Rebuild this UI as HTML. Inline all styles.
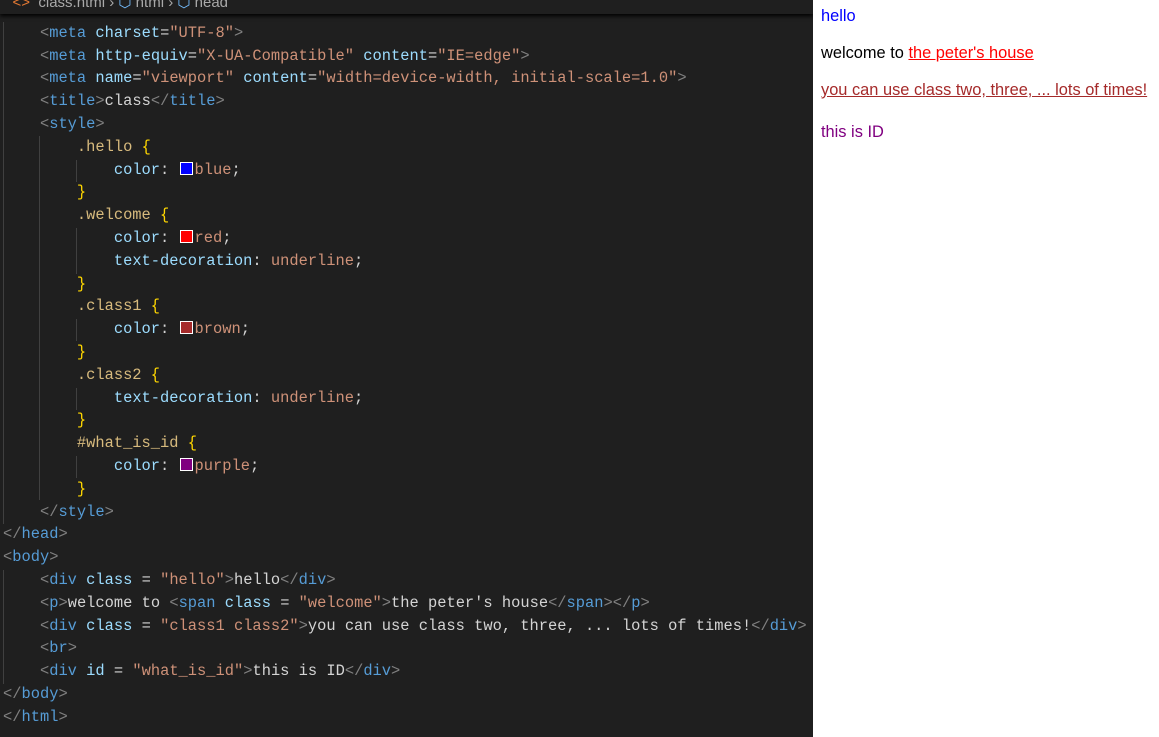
<!DOCTYPE html>
<html><head><meta charset="UTF-8"><style>
body{margin:0;width:1159px;height:737px;overflow:hidden;background:#1f1f1f;position:relative;font-family:"Liberation Mono","DejaVu Sans Mono",monospace}
#ed{position:absolute;left:0;top:0;width:813px;height:737px;background:#1f1f1f;overflow:hidden}
#bc{position:absolute;left:0;top:-8px;height:22px;width:813px;background:#1f1f1f;color:#a9a9a9;font-family:"Liberation Sans",sans-serif;font-size:15px;line-height:22px;box-shadow:0 2px 4px #000;z-index:2;white-space:pre}
#code{position:absolute;left:3px;top:-1px;font-size:15.4px;line-height:22.8px;white-space:pre;color:#d4d4d4}
.g{color:#808080}.t{color:#569cd6}.a{color:#9cdcfe}.s{color:#ce9178}.sel{color:#d7ba7d}.b{color:#ffd700}.p{color:#9cdcfe}.v{color:#ce9178}
.sw{display:inline-block;width:11px;height:11px;border:1px solid #fff;margin:0 2px 0 1px;vertical-align:-1px}
.guide{position:absolute;width:1px;background:#404040}
#pv{position:absolute;left:813px;top:0;width:346px;height:737px;background:#fff;font-family:"Liberation Sans",sans-serif;font-size:16.4px;color:#000}
#pv div{position:absolute;left:8px;white-space:nowrap}
</style></head><body>
<div id="ed">
<div id="bc">   <span style="color:#e37933">&lt;&gt;</span>  class.html › <span style="color:#75beff">⬡</span> html › <span style="color:#75beff">⬡</span> head</div>
<div class="guide" style="left:3px;top:22px;height:502px"></div>
<div class="guide" style="left:39px;top:136px;height:364px"></div>
<div class="guide" style="left:76px;top:160px;height:22px"></div>
<div class="guide" style="left:76px;top:228px;height:46px"></div>
<div class="guide" style="left:76px;top:319px;height:22px"></div>
<div class="guide" style="left:76px;top:388px;height:22px"></div>
<div class="guide" style="left:76px;top:456px;height:22px"></div>
<div class="guide" style="left:3px;top:570px;height:114px"></div>
<div id="code"><span class="g">&lt;/</span><span class="t">head</span><span class="g">&gt;</span>
    <span class="g">&lt;</span><span class="t">meta</span> <span class="a">charset</span>=<span class="s">"UTF-8"</span><span class="g">&gt;</span>
    <span class="g">&lt;</span><span class="t">meta</span> <span class="a">http-equiv</span>=<span class="s">"X-UA-Compatible"</span> <span class="a">content</span>=<span class="s">"IE=edge"</span><span class="g">&gt;</span>
    <span class="g">&lt;</span><span class="t">meta</span> <span class="a">name</span>=<span class="s">"viewport"</span> <span class="a">content</span>=<span class="s">"width=device-width, initial-scale=1.0"</span><span class="g">&gt;</span>
    <span class="g">&lt;</span><span class="t">title</span><span class="g">&gt;</span>class<span class="g">&lt;/</span><span class="t">title</span><span class="g">&gt;</span>
    <span class="g">&lt;</span><span class="t">style</span><span class="g">&gt;</span>
        <span class="sel">.hello</span> <span class="b">{</span>
            <span class="p">color</span>: <span class="sw" style="background:#00f"></span><span class="v">blue</span>;
        <span class="b">}</span>
        <span class="sel">.welcome</span> <span class="b">{</span>
            <span class="p">color</span>: <span class="sw" style="background:#f00"></span><span class="v">red</span>;
            <span class="p">text-decoration</span>: <span class="v">underline</span>;
        <span class="b">}</span>
        <span class="sel">.class1</span> <span class="b">{</span>
            <span class="p">color</span>: <span class="sw" style="background:#a52a2a"></span><span class="v">brown</span>;
        <span class="b">}</span>
        <span class="sel">.class2</span> <span class="b">{</span>
            <span class="p">text-decoration</span>: <span class="v">underline</span>;
        <span class="b">}</span>
        <span class="sel">#what_is_id</span> <span class="b">{</span>
            <span class="p">color</span>: <span class="sw" style="background:#800080"></span><span class="v">purple</span>;
        <span class="b">}</span>
    <span class="g">&lt;/</span><span class="t">style</span><span class="g">&gt;</span>
<span class="g">&lt;/</span><span class="t">head</span><span class="g">&gt;</span>
<span class="g">&lt;</span><span class="t">body</span><span class="g">&gt;</span>
    <span class="g">&lt;</span><span class="t">div</span> <span class="a">class</span> = <span class="s">"hello"</span><span class="g">&gt;</span>hello<span class="g">&lt;/</span><span class="t">div</span><span class="g">&gt;</span>
    <span class="g">&lt;</span><span class="t">p</span><span class="g">&gt;</span>welcome to <span class="g">&lt;</span><span class="t">span</span> <span class="a">class</span> = <span class="s">"welcome"</span><span class="g">&gt;</span>the peter's house<span class="g">&lt;/</span><span class="t">span</span><span class="g">&gt;&lt;/</span><span class="t">p</span><span class="g">&gt;</span>
    <span class="g">&lt;</span><span class="t">div</span> <span class="a">class</span> = <span class="s">"class1 class2"</span><span class="g">&gt;</span>you can use class two, three, ... lots of times!<span class="g">&lt;/</span><span class="t">div</span><span class="g">&gt;</span>
    <span class="g">&lt;</span><span class="t">br</span><span class="g">&gt;</span>
    <span class="g">&lt;</span><span class="t">div</span> <span class="a">id</span> = <span class="s">"what_is_id"</span><span class="g">&gt;</span>this is ID<span class="g">&lt;/</span><span class="t">div</span><span class="g">&gt;</span>
<span class="g">&lt;/</span><span class="t">body</span><span class="g">&gt;</span>
<span class="g">&lt;/</span><span class="t">html</span><span class="g">&gt;</span></div>
</div>
<div id="pv">
<div style="top:7px;color:#00f">hello</div>
<div style="top:44px">welcome to <span style="color:#f00;text-decoration:underline">the peter's house</span></div>
<div style="top:81px;color:#a52a2a;text-decoration:underline">you can use class two, three, ... lots of times!</div>
<div style="top:123px;color:#800080">this is ID</div>
</div>
</body></html>
